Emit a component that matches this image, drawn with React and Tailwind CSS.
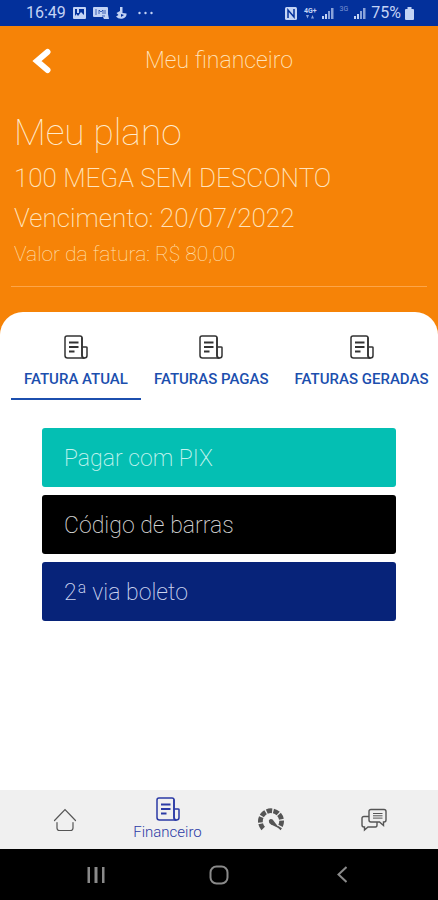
import { useState } from "react";

const tabs = ["FATURA ATUAL", "FATURAS PAGAS", "FATURAS GERADAS"];

const actions = [
  { label: "Pagar com PIX", color: "bg-[#04bfb3] text-[#c4f3ef]" },
  { label: "Código de barras", color: "bg-black text-[#d4d4d4]" },
  { label: "2ª via boleto", color: "bg-[#072379] text-[#ccd5f0]" },
];

const InvoiceIcon = ({ className }) => (
  <svg viewBox="0 0 24 24" fill="none" stroke="currentColor" className={className}>
    <path d="M18 3Q18 1 16 1H3Q1 1 1 3V20.5Q1 23 3.5 23H20.5Q23 23 23 20.5V12.5Q23 12 22 12H18.5" strokeWidth="1.5" />
    <path d="M18 2.5V20.5Q18 23 20.5 23" strokeWidth="1.9" />
    <path d="M5 7.5H14.5M5 12H14.5M5 16.5H10.5" strokeWidth="1.9" />
  </svg>
);

const HomeIcon = () => (
  <svg viewBox="0 0 24 24" fill="none" stroke="currentColor" strokeWidth="1.2" strokeLinecap="round" className="size-6">
    <path d="M1.5 12.5L12 1.5L22.5 12.5M4 14.5V20Q4 22.5 6.5 22.5H17.5Q20 22.5 20 20V14.5" />
  </svg>
);

const GaugeIcon = () => (
  <svg viewBox="0 0 26 24" fill="none" stroke="currentColor" className="h-6 w-[26px]">
    <path d="M5.2 20.5A10.6 10.6 0 1 1 20.8 20.5" strokeWidth="4.8" strokeDasharray="5.4 1.3" />
    <path d="M10.8 12.5Q12.5 10.2 14.6 11.6L21.5 20.5L13 16.4Q10.4 14.6 10.8 12.5Z" fill="currentColor" stroke="none" />
  </svg>
);

const ChatIcon = () => (
  <svg viewBox="0 0 26 24" fill="none" stroke="currentColor" strokeWidth="1.4" className="h-6 w-[26px]">
    <path d="M10 1.5H23Q25 1.5 25 3.5V12Q25 14 23 14H22.5V17.5L18.5 14H10Q8 14 8 12V3.5Q8 1.5 10 1.5Z" />
    <path d="M8 8.5H3Q1 8.5 1 10.5V17Q1 19 3 19H3.5V22L7 19H14.5Q16 19 16 17V14" />
    <path d="M12 5.5H21.5M12 7.8H21.5M12 10.1H21.5" strokeWidth="1" />
  </svg>
);

const SignalIcon = ({ className }) => (
  <svg viewBox="0 0 12 12" fill="currentColor" className={className}>
    <path d="M0 9h2v3H0zM3 7h2v5H3z" />
    <path d="M6 4h2v8H6zM9 1h2.5v11H9z" opacity="0.7" />
  </svg>
);

const StatusBar = () => (
  <div className="flex h-[26px] items-center justify-between bg-[#03309b] pr-6 pl-[26px] text-[#c3d3f5]">
    <div className="flex items-center gap-[7px]">
      <span className="text-base">16:49</span>
      <svg viewBox="0 0 13 12" className="h-3 w-[13px]">
        <path d="M1 0H12Q13 0 13 1V11Q13 12 12 12H1Q0 12 0 11V1Q0 0 1 0Z" fill="currentColor" />
        <path d="M2 2H11V8L8 5L5 9L3.5 7L2 9Z" fill="#03309b" />
        <path d="M4 2H6V6H4Z" fill="currentColor" />
      </svg>
      <svg viewBox="0 0 16 12" className="h-3 w-4">
        <path d="M1 0H14Q15 0 15 1V7L16 12H11L10 10H1Q0 10 0 9V1Q0 0 1 0Z" fill="currentColor" />
        <path d="M2 3H4M2 5H4M2 7H4M6 7V3L8 5L10 3V7M12 3V7M9 9H12" stroke="#03309b" strokeWidth="0.7" fill="none" />
      </svg>
      <svg viewBox="0 0 11 12" className="h-3 w-[11px]" fill="currentColor">
        <path d="M4 0H6.5V6L10.5 6.5Q11 10 7 11.5Q2.5 12.5 0 9.5L2.5 8L0.5 6L4 4Z" />
        <path d="M5 7L8 8L5 10Z" fill="#03309b" />
      </svg>
      <svg viewBox="0 0 15 4" className="ml-1 h-1 w-[15px]" fill="currentColor">
        <circle cx="1.5" cy="2" r="1.2" />
        <circle cx="7.5" cy="2" r="1.2" />
        <circle cx="13.5" cy="2" r="1.2" />
      </svg>
    </div>
    <div className="flex items-center">
      <svg viewBox="0 0 12 13" className="mr-[7px] h-[13px] w-3">
        <rect width="12" height="13" rx="1.5" fill="currentColor" />
        <path d="M3 11V3L9 10V2" stroke="#03309b" strokeWidth="1.5" fill="none" />
      </svg>
      <span className="mr-[5px] flex flex-col items-center">
        <span className="text-[7px] leading-[7px] font-bold">4G+</span>
        <svg viewBox="0 0 8 4" className="h-1 w-2" fill="currentColor" opacity="0.7">
          <path d="M0 0H3L1.5 3.5ZM5 3.5H8L6.5 0Z" />
        </svg>
      </span>
      <SignalIcon className="mr-[6px] size-3" />
      <span className="mr-[6px] mb-2 text-[7px] leading-[8px] opacity-60">3G</span>
      <SignalIcon className="mr-[5px] size-3" />
      <span className="mr-1 text-base">75%</span>
      <svg viewBox="0 0 9 13" className="h-[13px] w-[9px]" fill="currentColor">
        <path d="M2.5 0H6.5V2H8Q9 2 9 3V12Q9 13 8 13H1Q0 13 0 12V3Q0 2 1 2H2.5Z" />
      </svg>
    </div>
  </div>
);

const Header = () => (
  <header className="grid h-[70px] grid-cols-[80px_1fr_80px] items-center">
    <button type="button" aria-label="Voltar" className="pl-8 text-white">
      <svg viewBox="0 0 19 28" className="h-7 w-[19px]" fill="none" stroke="currentColor" strokeWidth="6" strokeLinecap="round">
        <path d="M15.5 5L5 14L15.5 23" />
      </svg>
    </button>
    <h1 className="text-center text-[23px] leading-9 font-extralight text-[#ffe3bd]">Meu financeiro</h1>
  </header>
);

const PlanInfo = () => (
  <section className="mx-[11px] border-b border-[#fda548] pb-[14px] pl-[3px] font-extralight text-[#ffe3bd]">
    <h2 className="pt-[14px] text-[37px] leading-[46px] font-thin text-[#ffecd0]">Meu plano</h2>
    <p className="text-[26px] leading-[44px]">100 MEGA SEM DESCONTO</p>
    <p className="text-[26px] leading-[36px]">Vencimento: 20/07/2022</p>
    <p className="text-[21px] leading-[36px] font-thin">Valor da fatura: R$ 80,00</p>
  </section>
);

const BottomNav = () => (
  <nav className="grid h-[59px] grid-cols-4 items-center justify-items-center bg-[#f0f0f0] px-[13px] text-[#555]">
    <a href="#inicio" aria-label="Início">
      <HomeIcon />
    </a>
    <a href="#financeiro" className="flex flex-col items-center text-[#2b3aa5]">
      <InvoiceIcon className="size-6" />
      <span className="text-[15px] leading-[22px] font-light">Financeiro</span>
    </a>
    <a href="#consumo" aria-label="Consumo">
      <GaugeIcon />
    </a>
    <a href="#suporte" aria-label="Suporte">
      <ChatIcon />
    </a>
  </nav>
);

const SystemNav = () => (
  <div className="grid h-[51px] grid-cols-3 items-center justify-items-center bg-black px-[34px] text-[#8a8a8a]">
    <button type="button" aria-label="Recentes">
      <svg viewBox="0 0 18 16" className="h-4 w-[18px]" fill="currentColor">
        <path d="M0.5 0H3V16H0.5ZM7.5 0H10.5V16H7.5ZM15 0H17.5V16H15Z" />
      </svg>
    </button>
    <button type="button" aria-label="Tela inicial">
      <svg viewBox="0 0 20 20" className="size-5" fill="none" stroke="currentColor" strokeWidth="2">
        <rect x="1.5" y="1.5" width="17" height="17" rx="6" />
      </svg>
    </button>
    <button type="button" aria-label="Voltar">
      <svg viewBox="0 0 10 17" className="h-[17px] w-[10px]" fill="none" stroke="currentColor" strokeWidth="2">
        <path d="M9.5 1L1.5 8.5L9.5 16" />
      </svg>
    </button>
  </div>
);

const App = () => {
  const [activeTab, setActiveTab] = useState(tabs[0]);

  return (
    <div className="flex min-h-screen flex-col bg-white font-[Roboto,sans-serif]">
      <StatusBar />
      <div className="bg-[#f68307]">
        <Header />
        <PlanInfo />
        <div className="mt-[25px] h-[23px] rounded-t-[23px] bg-white" />
      </div>
      <main className="flex-1">
        <div className="flex overflow-hidden pl-[11px]">
          {tabs.map((tab) => (
            <button
              key={tab}
              type="button"
              onClick={() => setActiveTab(tab)}
              className={`flex shrink-0 flex-col items-center border-b-2 px-[13px] pb-[7px] text-[#1c4fae] ${
                activeTab === tab ? "border-[#1c4fae]" : "border-transparent"
              }`}
            >
              <InvoiceIcon className="size-6 text-[#333]" />
              <span className="mt-2 text-[15px] leading-6 font-medium whitespace-nowrap">{tab}</span>
            </button>
          ))}
        </div>
        <div className="flex flex-col gap-2 px-[42px] py-7">
          {actions.map(({ label, color }) => (
            <button
              key={label}
              type="button"
              className={`h-[59px] rounded-[3px] px-[22px] pt-1 text-left text-[23px] font-extralight ${color}`}
            >
              {label}
            </button>
          ))}
        </div>
      </main>
      <BottomNav />
      <SystemNav />
    </div>
  );
};

export default App;
